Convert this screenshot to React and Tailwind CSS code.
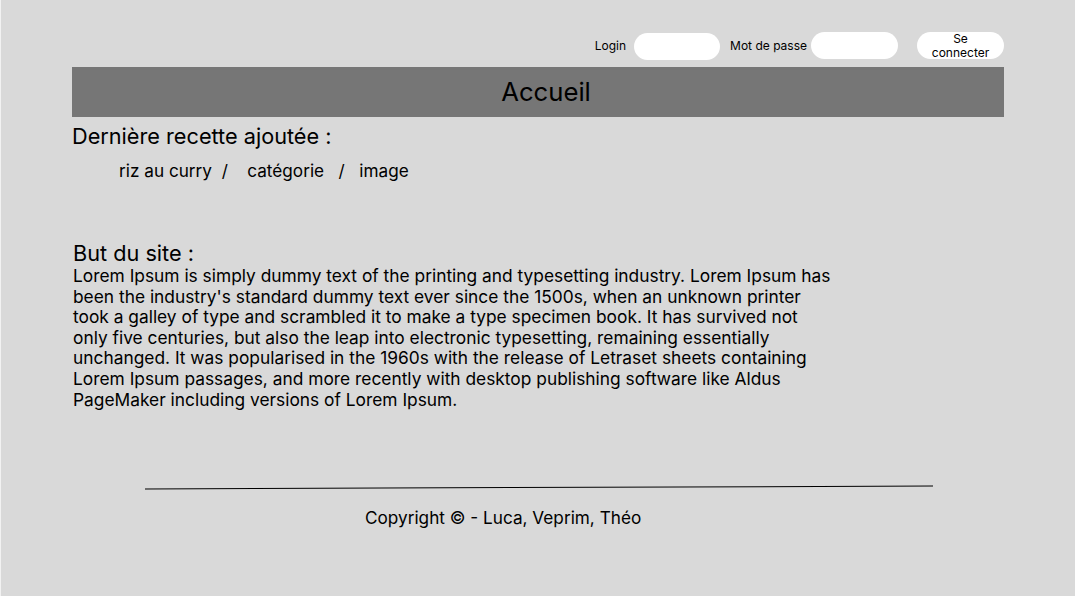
const lines = [
  "Lorem Ipsum is simply dummy text of the printing and typesetting industry. Lorem Ipsum has",
  "been the industry's standard dummy text ever since the 1500s, when an unknown printer",
  "took a galley of type and scrambled it to make a type specimen book. It has survived not",
  "only five centuries, but also the leap into electronic typesetting, remaining essentially",
  "unchanged. It was popularised in the 1960s with the release of Letraset sheets containing",
  "Lorem Ipsum passages, and more recently with desktop publishing software like Aldus",
  "PageMaker including versions of Lorem Ipsum.",
];

export default function App() {
  return (
    <div
      className="h-[596px] w-full bg-[#d9d9d9] border-l border-[#f2f2f2] text-black overflow-hidden"
      style={{ fontFamily: "Inter, 'Noto Sans', sans-serif" }}
    >
      {/* Login bar */}
      <div className="flex items-center justify-end pr-[71px] pt-[31px] h-[59px]">
        <span className="text-[12px] mr-[8px] mt-[2px]">Login</span>
        <div className="w-[86px] h-[27px] rounded-full bg-white mt-[2px]"></div>
        <span className="text-[12px] ml-[10px] mr-[4px] mt-[2px]">Mot de passe</span>
        <div className="w-[87px] h-[27px] rounded-full bg-white"></div>
        <button className="ml-[19px] w-[87px] h-[27px] rounded-full bg-white text-[12px] leading-[14px]">
          Se
          <br />
          connecter
        </button>
      </div>

      {/* Header */}
      <div className="mx-[71px] mt-[8px] h-[50px] bg-[#767676] flex items-center justify-center">
        <h1 className="text-[25.7px] pt-[1px] pl-[16px]">Accueil</h1>
      </div>

      {/* Last recipe */}
      <div className="ml-[71px] mt-[6px]">
        <h2 className="text-[21.7px] leading-[26px] whitespace-nowrap">Dernière recette ajoutée :</h2>
        <p className="ml-[47px] mt-[12px] text-[17.2px] leading-[20px] whitespace-nowrap">
          riz au curry &nbsp;/ &nbsp;&nbsp;&nbsp;catégorie &nbsp;&nbsp;/ &nbsp;&nbsp;image
        </p>
      </div>

      {/* About */}
      <div className="ml-[72px] mt-[60px]">
        <h2 className="text-[21.7px] leading-[24px]">But du site :</h2>
        <p className="text-[17.35px] leading-[20.6px] mt-[1px] whitespace-nowrap">
          {lines.map((l, i) => (
            <span key={i} className="block">
              {l}
            </span>
          ))}
        </p>
      </div>

      {/* Footer */}
      <div className="mt-[77px]">
        <div className="ml-[144px] w-[788px] h-px bg-black -rotate-[0.2deg]"></div>
        <p className="ml-[364px] mt-[20px] text-[17.2px] leading-[20px]">Copyright © - Luca, Veprim, Théo</p>
      </div>
    </div>
  );
}
